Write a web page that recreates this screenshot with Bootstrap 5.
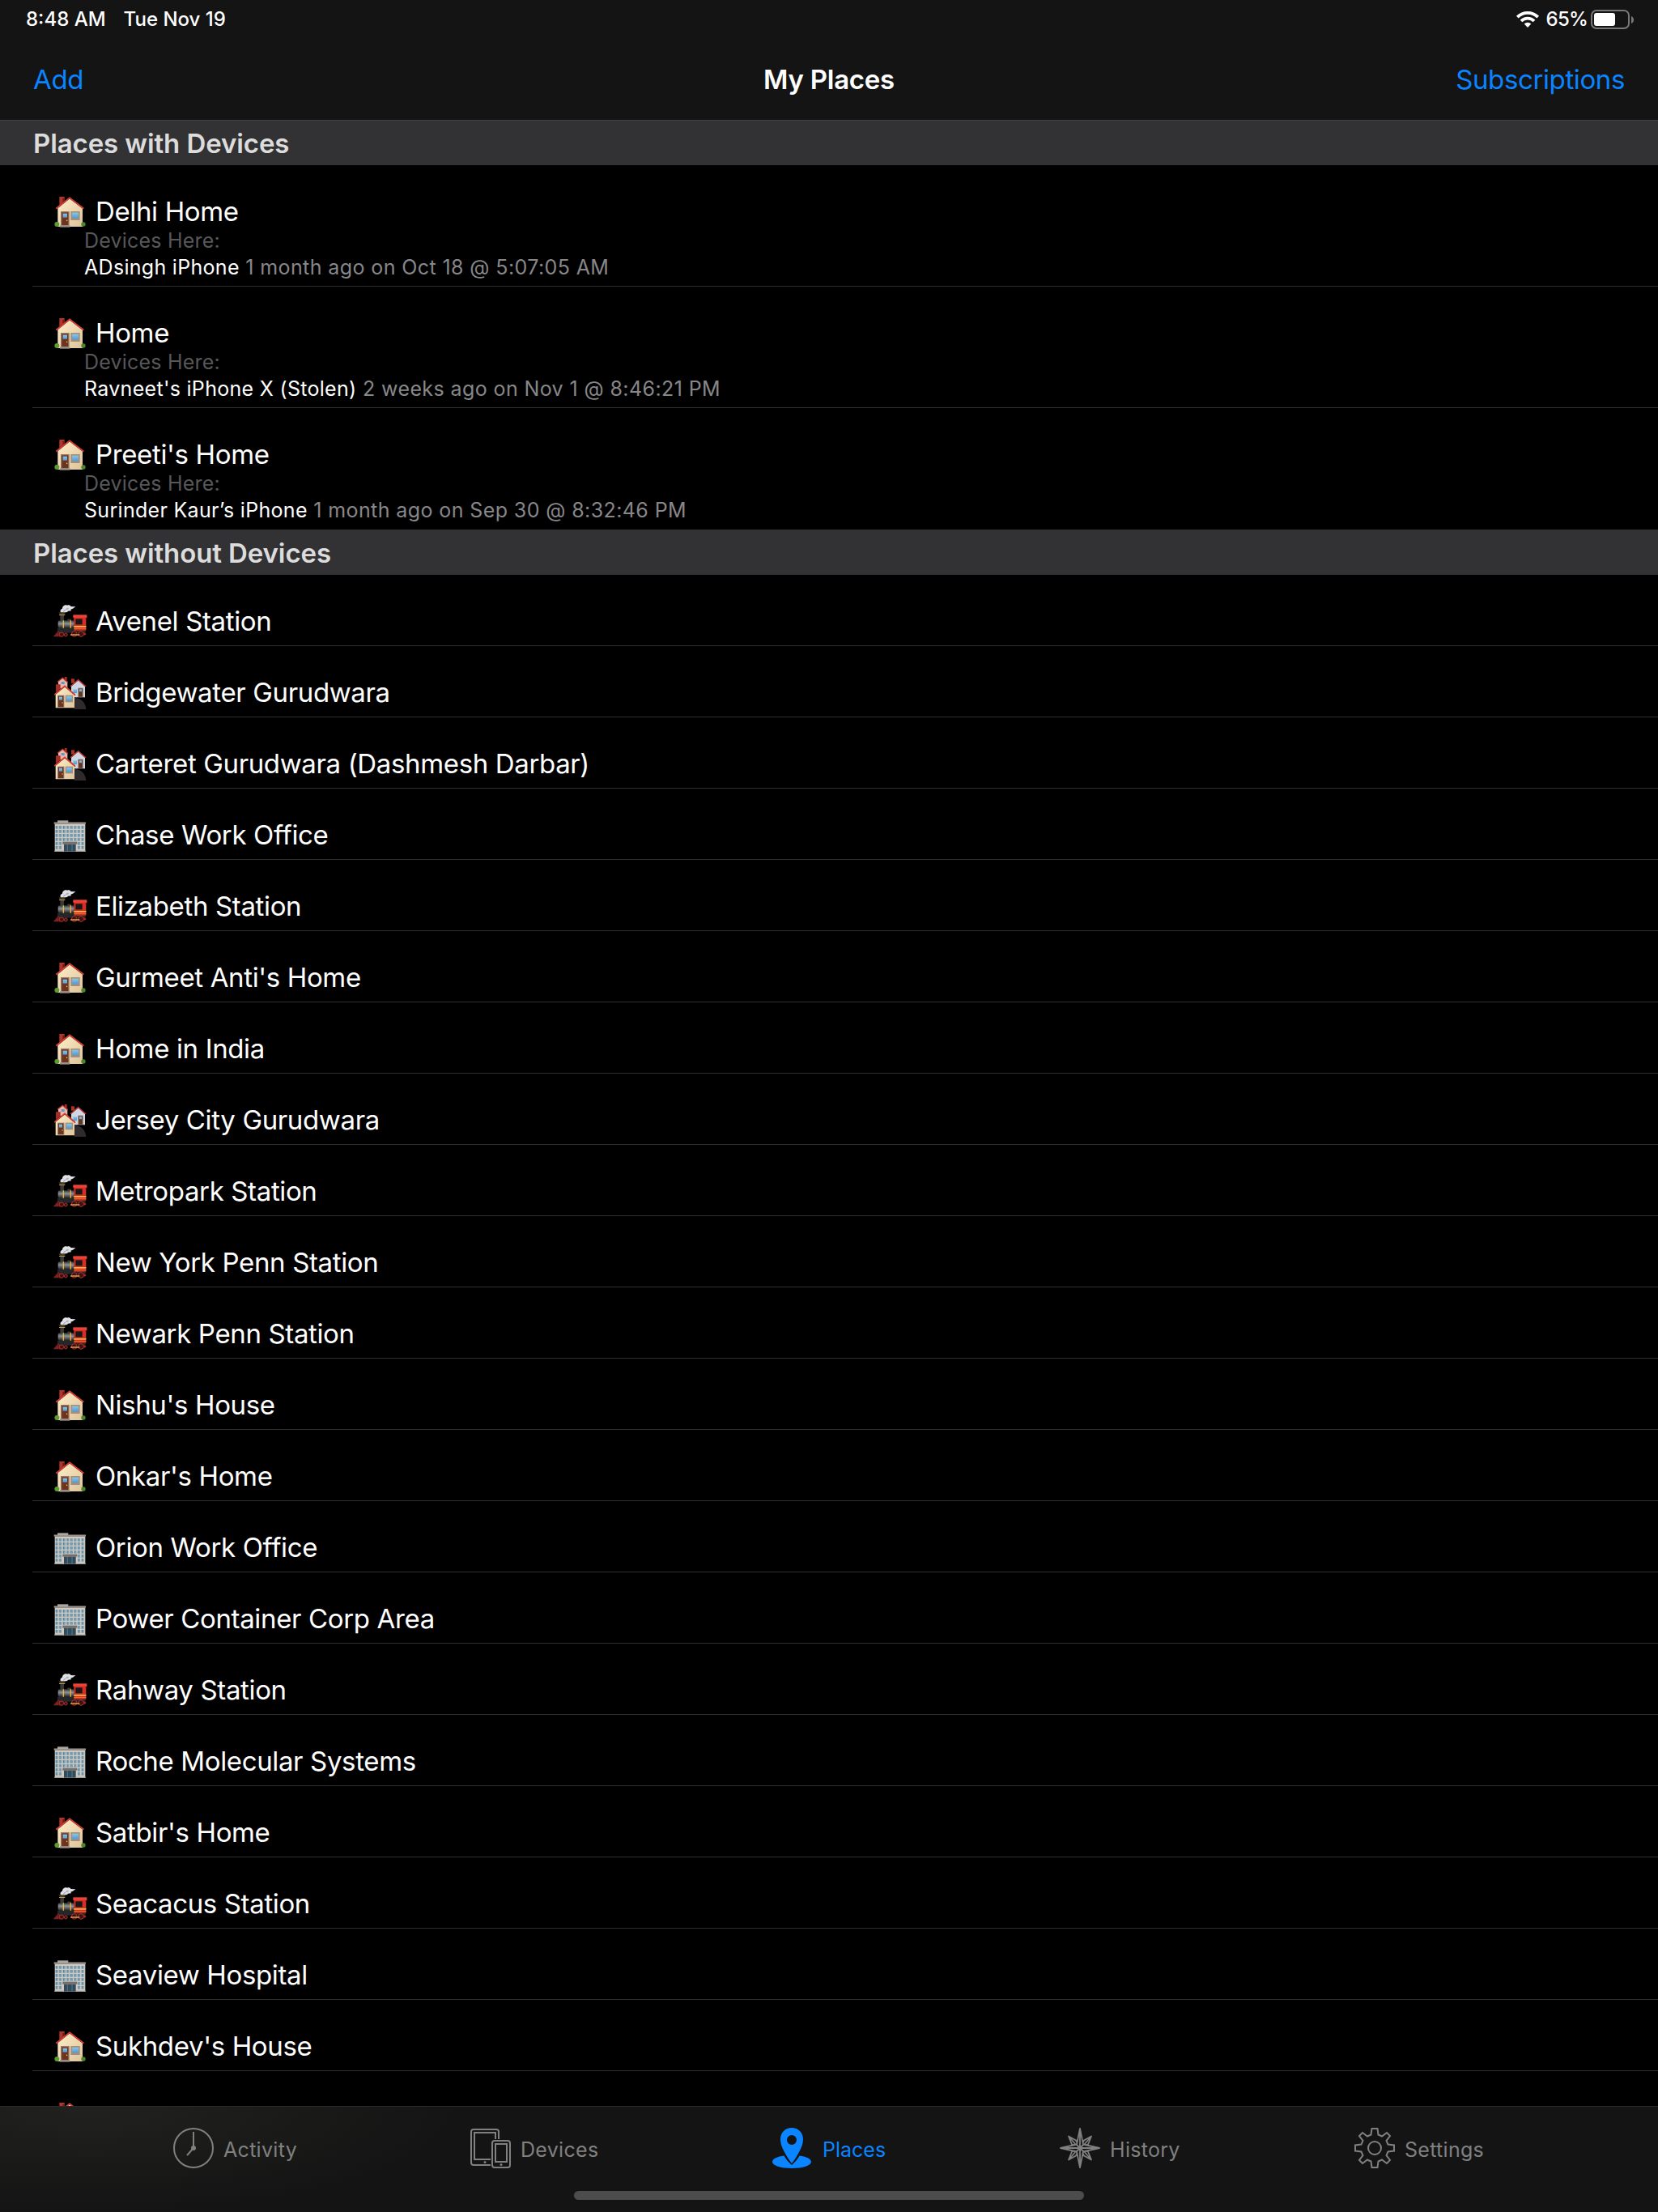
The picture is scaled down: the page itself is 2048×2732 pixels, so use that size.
<!DOCTYPE html>
<html lang="en">
<head>
    <meta charset="utf-8">
    <title>My Places</title>
    <link href="https://cdn.jsdelivr.net/npm/bootstrap@5.3.0/dist/css/bootstrap.min.css" rel="stylesheet">
    <style>
        body { font-family: Inter, "Liberation Sans", sans-serif; background: #000; color: #fff; }
        svg { display: block; flex: none; overflow: visible; }
        .top-area { height: 148px; background: #141414; box-shadow: 0 1px #414142; z-index: 1; }
        .status-line { height: 48px; padding: 0 29px 0 32px; font-size: 24px; font-weight: 500; line-height: 48px; }
        .status-date { margin-left: 22px; }
        .battery-level { margin: 0 4px 0 9px; letter-spacing: -.8px; }
        .title-line { height: 100px; padding: 3px 41px 0 41px; font-size: 33px; line-height: 94px; letter-spacing: -.38px; }
        .title-line a { color: #0a84ff; text-decoration: none; }
        .title-line h1 { font-size: 33px; font-weight: 600; line-height: 94px; letter-spacing: -.25px; }
        .group-head { height: 56px; padding: 2px 40px 0 41px; background: #323234; color: #dcdcdd; font-size: 33px; font-weight: 600; line-height: 54px; letter-spacing: -.1px; }
        .place { height: 88px; margin-left: 40px; padding: 38px 0 0 26px; border-bottom: 1px solid #303032; }
        .place.tall { height: 150px; }
        .group:first-child .place:last-child { border-color: transparent; }
        .place-name { margin-left: 12px; font-size: 33px; line-height: 38px; letter-spacing: -.36px; }
        .place-info { margin-top: -1px; padding-left: 38px; font-size: 25px; line-height: 33px; letter-spacing: .4px; color: #87878a; }
        .place-info .label { color: #57575a; letter-spacing: .2px; }
        .place-info .text-white { letter-spacing: .3px; }
        .tab-area { height: 131px; border-top: 1px solid #2a2a2b; background: radial-gradient(ellipse 460px 130px at 110px 0, #21211f, #141414) #141414; }
        .tabs { display: grid; grid-template-columns: 367px 373px 355px 364px 1fr; padding: 26px 0 0 214px; }
        .tabs a { display: flex; color: #808080; font-size: 25px; line-height: 50px; letter-spacing: .3px; text-decoration: none; }
        .tabs a.active { color: #0a84ff; letter-spacing: 0; }
        .tabs span { margin: 2px 0 0 12px; }
        .home-bar { width: 630px; height: 11px; margin-top: 26px; border-radius: 6px; background: #4c4c4c; }
    </style>
</head>
<body>
<svg width="0" height="0" class="position-absolute">
    <defs>
        <linearGradient id="wall" x2="1" y2="1"><stop stop-color="#ffedc8"/><stop offset="1" stop-color="#dcc49a"/></linearGradient>
        <linearGradient id="glass" x2="0" y2="1"><stop stop-color="#87c6ee"/><stop offset="1" stop-color="#4f9bd0"/></linearGradient>
        <linearGradient id="boiler" x2="0" y2="1"><stop stop-color="#34383a"/><stop offset=".4" stop-color="#8d9294"/><stop offset="1" stop-color="#1c1e20"/></linearGradient>
        <pattern id="panes" x="6" y="24" width="13.7" height="15" patternUnits="userSpaceOnUse">
            <path fill="#4e86a6" d="M2 0h8v11h-8z"/><path fill="#d4d0c8" d="M5.5 0h1v11h-1z"/>
        </pattern>

        <symbol id="house" viewBox="0 0 120 120" overflow="visible">
            <path fill="#b3352b" d="M22 3h19v16L22 34z"/><path fill="#6e1f1a" d="M34 8h7v10l-7 6z"/>
            <path fill="url(#wall)" d="M16 45 60 9l48 37v68H16z"/>
            <path fill="none" stroke="#a8322a" stroke-width="4" d="M10 48 60 8l52 40"/>
            <path fill="none" stroke="#dc4138" stroke-width="4" d="M10 46 60 6l52 40"/>
            <path fill="#9a7a66" d="M27 57h32v53H27z"/><path fill="#6b3320" d="M31 61h24v48H31z"/>
            <path fill="url(#glass)" d="M35 65h16v15H35z"/><circle cx="50" cy="91" r="2.5" fill="#f4c430"/>
            <path fill="#a98d76" d="M64 57h34v33H64z"/><path fill="url(#glass)" d="M69 62h24v21H69z"/>
            <circle cx="13" cy="105" r="9" fill="#5f9a35"/><circle cx="111" cy="105" r="8" fill="#4b862a"/>
            <path fill="#97908a" d="M24 109h37v7H24z"/>
        </symbol>

        <symbol id="train" viewBox="0 0 120 120" overflow="visible">
            <path fill="#dfe1e6" d="M30 28c-7-6-5-15 3-17 0-10 11-16 18-12 7-3 13 1 13 4l18 1-10 7-8 3 2 5-12 1c-4 7-12 3-16 8z"/>
            <path fill="#aeb2b8" d="M36 24c-1-7 4-10 9-9 1-6 9-8 13-5l-5 5-7 1c-2 6-6 3-10 8z"/>
            <path fill="#3b3a35" d="M20 25h25l-6 12v20H25V37z"/><path fill="#c89b32" d="M21 33h22v3H21z"/>
            <path fill="#4c3a25" d="M52 50h14v10H52z"/>
            <rect x="17" y="55" width="60" height="29" rx="5" fill="url(#boiler)"/>
            <path fill="#e9b83b" d="M35 55h4v29h-4zM62 55h4v29h-4z"/>
            <path fill="#252628" d="M15 83h104v18H15z"/>
            <path fill="#ee4438" d="M73 34h51v11H73z"/><path fill="#d42e27" d="M76 44h45v48H76z"/>
            <path fill="#171717" d="M82 49h25v21H82z"/><path fill="#f1bd3b" d="M76 75h45v5H76z"/><path fill="#e96b29" d="M76 84h45v3H76z"/>
            <path fill="#8e2424" d="m17 94-17 21h28l-6-19z"/><path stroke="#411314" stroke-width="2" d="m16 97-8 17M19 97v17"/>
            <g fill="#351416" stroke="#b32b2a" stroke-width="3"><circle cx="30" cy="107" r="8"/><circle cx="46" cy="108" r="6"/><circle cx="77" cy="105" r="10"/><circle cx="102" cy="105" r="10"/></g>
            <path fill="#efb536" d="M63 106h34v4H63z"/><path fill="#ba2825" d="m112 98 10 8-9 5z"/>
        </symbol>

        <symbol id="houses" viewBox="0 0 120 120" overflow="visible">
            <path fill="#eab9ae" d="M18 16 34 4l18 13v25H18z"/><path fill="#a52b25" d="M41 0h9v14h-9z"/>
            <path fill="none" stroke="#b8362f" stroke-width="4" d="m15 19 19-15 19 16"/><path fill="#5d9cc2" d="M29 18h12v9H29z"/>
            <path fill="#a9332a" d="M66 7h12v16H66z"/><path fill="#cfd7e3" d="M66 35 92 13l25 22v41H66z"/>
            <path fill="none" stroke="#c43a32" stroke-width="4" d="m63 35 29-24 28 25"/>
            <path fill="#8d6f5c" d="M91 41h19v34H91z"/><path fill="#63301f" d="M94 44h13v29H94z"/><path fill="url(#glass)" d="M96 46h9v9h-9zM73 46h14v14H73z"/>
            <path fill="#302a2c" d="M77 78c23-1 41 13 44 42H77z"/>
            <path fill="#a52f27" d="M9 28h17v16L9 56z"/><path fill="url(#wall)" d="m8 63 34-27 36 28v51H8z"/>
            <path fill="none" stroke="#a8322a" stroke-width="4" d="m4 67 38-32 39 33"/><path fill="none" stroke="#dc4138" stroke-width="4" d="m4 65 38-32 39 33"/>
            <path fill="#9a7a66" d="M15 68h25v45H15z"/><path fill="#6b3320" d="M18 71h19v40H18z"/><path fill="url(#glass)" d="M21 74h12v12H21z"/><circle cx="33" cy="96" r="2" fill="#f4c430"/>
            <path fill="#a98d76" d="M44 68h28v26H44z"/><path fill="url(#glass)" d="M48 72h20v17H48z"/>
        </symbol>

        <symbol id="office" viewBox="0 0 120 120" overflow="visible">
            <path fill="#aaa49d" d="M15 4h40v9H15z"/><path fill="#cfcac1" d="M5 14h113v105H5z"/>
            <path fill="#827a74" d="M2 11h118v6H2z"/><path fill="#e4dfd6" d="M2 11h118v2H2z"/>
            <path fill="url(#panes)" d="M6 24h110v90H6z"/>
            <path fill="#cfcac1" d="M32 82h58v37H32z"/><path fill="#776e69" d="M34 83h54v9H34z"/>
            <path fill="#304b5c" d="M39 92h44v27H39z"/><path stroke="#7193a4" stroke-width="2" d="M52 93v26M69 93v26"/>
            <path fill="#a59f98" d="M3 116h36v3H3zM83 116h37v3H83z"/>
        </symbol>
    </defs>
</svg>

<div class="vh-100 d-flex flex-column overflow-hidden">
    <header class="top-area position-relative flex-shrink-0">
        <div class="status-line d-flex align-items-center">
            <span>8:48 AM</span>
            <span class="status-date">Tue Nov 19</span>
            <svg class="ms-auto" width="28" height="20" viewBox="0 0 28 20" fill="none" stroke="#fff" stroke-width="3.8">
                <path d="M1.3 7.2a18 18 0 0 1 25.4 0M6 12a11.4 11.4 0 0 1 16 0"/><path fill="#fff" stroke="none" d="m14 20-4.3-4.4a6.2 6.2 0 0 1 8.6 0z"/>
            </svg>
            <span class="battery-level">65%</span>
            <svg width="54" height="24" viewBox="0 0 54 24">
                <rect x="1" y="1" width="46" height="22" rx="6" fill="none" stroke="#78787a" stroke-width="2"/>
                <rect x="4" y="4" width="26" height="16" rx="3" fill="#fff"/><path fill="#78787a" d="M50 8c4 1 4 8 0 9z"/>
            </svg>
        </div>
        <nav class="title-line row g-0">
            <div class="col"><a href="#">Add</a></div>
            <h1 class="col-auto m-0">My Places</h1>
            <div class="col text-end"><a href="#">Subscriptions</a></div>
        </nav>
    </header>

    <main id="places" class="flex-grow-1 overflow-hidden"></main>

    <footer class="tab-area flex-shrink-0">
        <nav class="tabs">
            <a href="#">
                <svg width="50" height="50" viewBox="0 0 50 50" fill="none" stroke="currentColor" stroke-width="2"><circle cx="25" cy="25" r="24"/><path d="M25 5v20l-8 9"/><circle cx="25" cy="25" r="3" fill="currentColor" stroke="none"/></svg>
                <span>Activity</span>
            </a>
            <a href="#">
                <svg width="50" height="50" viewBox="0 0 50 50" fill="none" stroke="currentColor" stroke-width="2"><path d="M25 46H4a3 3 0 0 1-3-3V5a3 3 0 0 1 3-3h28a3 3 0 0 1 3 3v9M25 39H5V6h26v8"/><rect x="27" y="16" width="22" height="33" rx="3"/><path d="M31 20h14v22H31z"/><circle cx="18" cy="42.5" r="1.5" fill="currentColor" stroke="none"/><circle cx="38" cy="45.5" r="1.5" fill="currentColor" stroke="none"/></svg>
                <span>Devices</span>
            </a>
            <a href="#" class="active">
                <svg width="50" height="50" viewBox="0 0 50 50" fill="currentColor"><path fill-rule="evenodd" d="M24 0c8 0 14 6 14 14 0 6-2 10-4.5 15C31 34 28 39 24 44c-4-5-7-10-9.5-15C12 24 10 20 10 14 10 6 16 0 24 0zm0 9a6 6 0 1 0 0 12 6 6 0 0 0 0-12z"/><path d="M14.5 34.500C6 35.5 0 38.5 0 42c0 4.5 10.5 8 24 8s24-3.5 24-8c0-3.5-6-6.5-14.500-7.500C31 39 28 42.500 24 46c-4-3.500-7-7-9.500-11.500z"/></svg>
                <span>Places</span>
            </a>
            <a href="#">
                <svg width="50" height="50" viewBox="0 0 50 50" fill="none" stroke="currentColor" stroke-width="1.8" stroke-linejoin="round"><path d="m25 1 4 19.500L49 25l-20 4.500L25 49l-4-19.500L1 25l20-4.500zM25 1v48M1 25h48M20 21 11 10.500l9 5 2 4M30 21l9-10.500-9 5-2 4M20 29l-9 10.500 9-5 2-4M30 29l9 10.500-9-5-2-4M11 10.500l4 10 4 1M39 10.500l-4 10-4 1M11 39.500l4-10 4-1M39 39.500l-4-10-4-1M20 20l10 10M30 20 20 30"/></svg>
                <span>History</span>
            </a>
            <a href="#">
                <svg width="50" height="50" viewBox="0 0 50 50" fill="none" stroke="currentColor" stroke-width="2"><path d="M21.500 1h7l1 7.500 4.500 2L40 6l4 4-4.500 6 2 4.500 7.500 1v7l-7.500 1-2 4.500 4.500 6-4 4-6-4.500-4.500 2-1 7.500h-7l-1-7.500-4.500-2-6 4.500-4-4 4.500-6-2-4.500-7.500-1v-7l7.500-1 2-4.500L6 10l4-4 6 4.500 4.500-2z"/><circle cx="25" cy="25" r="8"/></svg>
                <span>Settings</span>
            </a>
        </nav>
        <div class="home-bar mx-auto"></div>
    </footer>
</div>

<script>
    const withDevices = [
        { icon: "house", name: "Delhi Home", device: "ADsingh iPhone", seen: "1 month ago on Oct 18 @ 5:07:05 AM" },
        { icon: "house", name: "Home", device: "Ravneet's iPhone X (Stolen)", seen: "2 weeks ago on Nov 1 @ 8:46:21 PM" },
        { icon: "house", name: "Preeti's Home", device: "Surinder Kaur’s iPhone", seen: "1 month ago on Sep 30 @ 8:32:46 PM" }
    ];

    const withoutDevices = [
        { icon: "train", name: "Avenel Station" },
        { icon: "houses", name: "Bridgewater Gurudwara" },
        { icon: "houses", name: "Carteret Gurudwara (Dashmesh Darbar)" },
        { icon: "office", name: "Chase Work Office" },
        { icon: "train", name: "Elizabeth Station" },
        { icon: "house", name: "Gurmeet Anti's Home" },
        { icon: "house", name: "Home in India" },
        { icon: "houses", name: "Jersey City Gurudwara" },
        { icon: "train", name: "Metropark Station" },
        { icon: "train", name: "New York Penn Station" },
        { icon: "train", name: "Newark Penn Station" },
        { icon: "house", name: "Nishu's House" },
        { icon: "house", name: "Onkar's Home" },
        { icon: "office", name: "Orion Work Office" },
        { icon: "office", name: "Power Container Corp Area" },
        { icon: "train", name: "Rahway Station" },
        { icon: "office", name: "Roche Molecular Systems" },
        { icon: "house", name: "Satbir's Home" },
        { icon: "train", name: "Seacacus Station" },
        { icon: "office", name: "Seaview Hospital" },
        { icon: "house", name: "Sukhdev's House" },
        { icon: "house", name: "" }
    ];

    function placeRow(p) {
        const info = p.device ? `
            <div class="place-info">
                <div class="label">Devices Here:</div>
                <div><span class="text-white">${p.device}</span> ${p.seen}</div>
            </div>` : "";
        return `
            <div class="place ${p.device ? "tall" : ""}">
                <div class="d-flex">
                    <svg width="40" height="40"><use href="#${p.icon}"/></svg>
                    <span class="place-name">${p.name}</span>
                </div>${info}
            </div>`;
    }

    function group(title, places) {
        return `
            <section class="group">
                <h2 class="group-head m-0">${title}</h2>
                ${places.map(placeRow).join("")}
            </section>`;
    }

    document.getElementById("places").innerHTML =
        group("Places with Devices", withDevices) + group("Places without Devices", withoutDevices);
</script>
<script src="https://cdn.jsdelivr.net/npm/bootstrap@5.3.0/dist/js/bootstrap.bundle.min.js"></script>
</body>
</html>
